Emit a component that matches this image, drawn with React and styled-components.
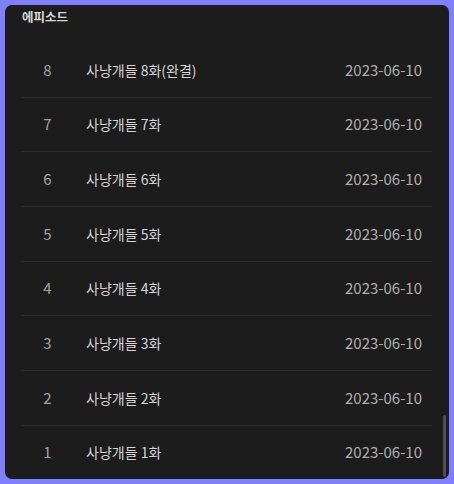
import React from "react";
import styled, { createGlobalStyle } from "styled-components";

const Global = createGlobalStyle`
  html, body { margin: 0; padding: 0; background: #8080ff; }
  body { font-family: "Noto Sans CJK KR", "Noto Sans", sans-serif; }
`;

const Page = styled.div`
  width: 454px;
  height: 484px;
  padding: 5px;
  box-sizing: border-box;
  background: #8080ff;
`;

const Card = styled.section`
  position: relative;
  height: 474px;
  background: #1c1c1c;
  border-radius: 7px;
  overflow: hidden;
  display: flex;
  flex-direction: column;
`;

const Header = styled.h2`
  margin: 0;
  flex: 0 0 38px;
  box-sizing: border-box;
  padding: 4px 17px 0;
  font-size: 12.5px;
  line-height: 15px;
  font-weight: 700;
  color: #d8d8d8;
`;

const List = styled.ul`
  list-style: none;
  margin: 0;
  padding: 0 17px 0 16px;
  flex: 1;
  overflow: hidden;
`;

const Row = styled.li`
  height: 54.67px;
  box-sizing: border-box;
  border-bottom: 1px solid #2b2b2b;
  display: grid;
  grid-template-columns: 53px 1fr auto;
  column-gap: 12px;
  align-items: center;
  padding-right: 10px;
  font-size: 15px;
  line-height: 20px;
`;

const Num = styled.span`
  text-align: center;
  color: #a4a4a4;
`;

const Title = styled.span`
  font-size: 14px;
  color: #d6d6d6;
`;

const DateText = styled.span`
  color: #b0b0b0;
`;

const Thumb = styled.div`
  position: absolute;
  right: 3px;
  bottom: 2px;
  width: 3px;
  height: 62px;
  border-radius: 2px;
  background: #4e4e4e;
`;

const episodes = [
  { n: 8, title: "사냥개들 8화(완결)" },
  { n: 7, title: "사냥개들 7화" },
  { n: 6, title: "사냥개들 6화" },
  { n: 5, title: "사냥개들 5화" },
  { n: 4, title: "사냥개들 4화" },
  { n: 3, title: "사냥개들 3화" },
  { n: 2, title: "사냥개들 2화" },
  { n: 1, title: "사냥개들 1화" },
];

export default function App() {
  return (
    <>
      <Global />
      <Page>
        <Card>
          <Header>에피소드</Header>
          <List>
            {episodes.map((e) => (
              <Row key={e.n}>
                <Num>{e.n}</Num>
                <Title>{e.title}</Title>
                <DateText>2023-06-10</DateText>
              </Row>
            ))}
          </List>
          <Thumb />
        </Card>
      </Page>
    </>
  );
}
